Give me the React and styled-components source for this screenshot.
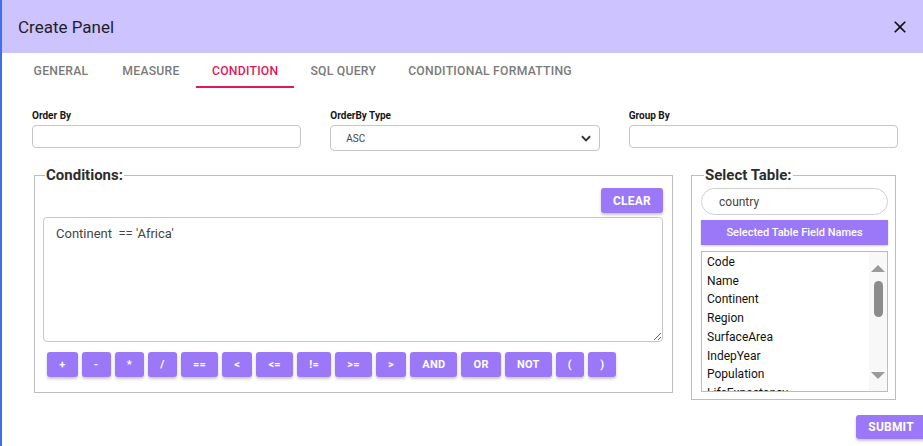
import React from "react";
import styled, { createGlobalStyle } from "styled-components";

const GlobalStyle = createGlobalStyle`
  html, body {
    margin: 0;
    padding: 0;
    background: #fff;
  }
  * {
    box-sizing: border-box;
  }
`;

const Dialog = styled.div`
  width: 923px;
  height: 446px;
  overflow: hidden;
  border-left: 2px solid #3f6fef;
  font-family: Roboto, "Liberation Sans", sans-serif;
  background: #fff;
  display: flex;
  flex-direction: column;
`;

const Header = styled.div`
  height: 53px;
  flex-shrink: 0;
  background: #cdc3fe;
  display: flex;
  align-items: center;
  justify-content: space-between;
  padding: 0 13px 0 16px;
`;

const Title = styled.h2`
  margin: 0;
  font-size: 17px;
  font-weight: 400;
  color: #1f1f2b;
`;

const CloseButton = styled.button`
  border: none;
  background: none;
  padding: 0;
  width: 20px;
  height: 20px;
  display: flex;
  align-items: center;
  justify-content: center;
  cursor: pointer;
`;

const Tabs = styled.div`
  display: flex;
  height: 35px;
  padding-left: 14px;
  flex-shrink: 0;
`;

const Tab = styled.div`
  min-width: 90px;
  padding: 0 16px;
  display: flex;
  align-items: center;
  justify-content: center;
  font-size: 12.2px;
  font-weight: 500;
  letter-spacing: 0.25px;
  text-transform: uppercase;
  color: ${(p) => (p.active ? "#e0185b" : "#7a7a7a")};
  border-bottom: 2px solid ${(p) => (p.active ? "#e0185b" : "transparent")};
  padding-top: 2px;
`;

const FormRow = styled.div`
  display: grid;
  grid-template-columns: repeat(3, 1fr);
  column-gap: 29px;
  padding: 22px 25px 0 30px;
`;

const Field = styled.div`
  display: flex;
  flex-direction: column;
`;

const Label = styled.label`
  font-size: 10px;
  font-weight: 700;
  line-height: 12px;
  color: #161616;
  margin-bottom: 3px;
`;

const TextInput = styled.input`
  height: 23px;
  border: 1px solid #c6c6c6;
  border-radius: 4px;
  outline: none;
  font-family: inherit;
`;

const SelectBox = styled.div`
  height: 26px;
  border: 1px solid #c6c6c6;
  border-radius: 4px;
  display: flex;
  align-items: center;
  justify-content: space-between;
  padding: 0 6px 0 15px;
  font-size: 10px;
  color: #444;
`;

const Main = styled.div`
  display: flex;
  align-items: flex-start;
  gap: 18px;
  padding: 15px 25px 0 32px;
`;

const Group = styled.fieldset`
  margin: 0;
  border: 1px solid #bdbdbd;
  width: ${(p) => p.width}px;
  padding: ${(p) => p.pad};
  min-width: 0;
`;

const Legend = styled.legend`
  font-size: 15px;
  font-weight: 700;
  color: #2d2d2d;
  padding: 0 1px;
  margin-left: ${(p) => p.offset}px;
  line-height: 18px;
`;

const ActionButton = styled.button`
  height: ${(p) => p.h || 25}px;
  padding: 0 12.2px;
  border: none;
  border-radius: 3px;
  background: #9b78f8;
  color: #fff;
  font-family: inherit;
  font-size: ${(p) => p.size || 11}px;
  font-weight: 700;
  letter-spacing: 0.2px;
  box-shadow: 0 2px 3px rgba(0, 0, 0, 0.22);
  cursor: pointer;
`;

const ClearRow = styled.div`
  display: flex;
  justify-content: flex-end;
`;

const Editor = styled.textarea`
  display: block;
  width: 620px;
  height: 125px;
  margin-top: 4px;
  border: 1px solid #c8c8c8;
  border-radius: 4px;
  padding: 8px 12px;
  font-family: inherit;
  font-size: 13px;
  color: #444;
  outline: none;
`;

const OperatorRow = styled.div`
  display: flex;
  gap: 4px;
  margin-top: 10px;
  padding-left: 4px;
`;

const SearchPill = styled.input`
  width: 187px;
  height: 27px;
  border: 1px solid #cfcfcf;
  border-radius: 14px;
  padding: 0 17px;
  font-family: inherit;
  font-size: 12px;
  color: #444;
  outline: none;
`;

const FieldBar = styled.div`
  width: 187px;
  height: 25px;
  margin-top: 5px;
  background: #9b78f8;
  color: #fff;
  font-size: 11px;
  font-weight: 500;
  display: flex;
  align-items: center;
  justify-content: center;
  box-shadow: 0 1px 2px rgba(0, 0, 0, 0.2);
`;

const ListBox = styled.div`
  width: 187px;
  height: 141px;
  margin-top: 6px;
  border: 1px solid #bcbcbc;
  display: flex;
  overflow: hidden;
`;

const Items = styled.ul`
  list-style: none;
  margin: 0;
  padding: 1px 0 0 5px;
  flex: 1;
  overflow: hidden;
`;

const Item = styled.li`
  font-size: 12px;
  line-height: 18.7px;
  color: #111;
`;

const ScrollTrack = styled.div`
  width: 18px;
  background: #f8f8f8;
  display: flex;
  flex-direction: column;
  align-items: center;
  padding-top: 13px;
`;

const Arrow = styled.div`
  width: 0;
  height: 0;
  border-left: 7px solid transparent;
  border-right: 7px solid transparent;
  ${(p) =>
    p.down
      ? "border-top: 7px solid #9a9a9a; margin-top: auto; margin-bottom: 12px;"
      : "border-bottom: 7px solid #9a9a9a;"}
`;

const Thumb = styled.div`
  width: 9px;
  height: 36px;
  margin-top: 9px;
  border-radius: 5px;
  background: #8c8c8c;
`;

const Footer = styled.div`
  display: flex;
  justify-content: flex-end;
  margin-top: 15px;
  margin-right: -1px;
`;

const operators = ["+", "-", "*", "/", "==", "<", "<=", "!=", ">=", ">", "AND", "OR", "NOT", "(", ")"];

const fields = ["Code", "Name", "Continent", "Region", "SurfaceArea", "IndepYear", "Population", "LifeExpectancy"];

const tabs = ["General", "Measure", "Condition", "SQL Query", "Conditional Formatting"];

function CloseIcon() {
  return (
    <svg width="20" height="20" viewBox="0 0 24 24">
      <path
        fill="#111"
        d="M19 6.41L17.59 5 12 10.59 6.41 5 5 6.41 10.59 12 5 17.59 6.41 19 12 13.41 17.59 19 19 17.59 13.41 12z"
      />
    </svg>
  );
}

function Chevron() {
  return (
    <svg width="14" height="14" viewBox="0 0 24 24">
      <path fill="none" stroke="#333" strokeWidth="3.2" d="M5 9l7 7 7-7" />
    </svg>
  );
}

export default function App() {
  return (
    <>
      <GlobalStyle />
      <Dialog>
        <Header>
          <Title>Create Panel</Title>
          <CloseButton>
            <CloseIcon />
          </CloseButton>
        </Header>

        <Tabs>
          {tabs.map((t) => (
            <Tab key={t} active={t === "Condition"}>
              {t}
            </Tab>
          ))}
        </Tabs>

        <FormRow>
          <Field>
            <Label>Order By</Label>
            <TextInput />
          </Field>
          <Field>
            <Label>OrderBy Type</Label>
            <SelectBox>
              ASC
              <Chevron />
            </SelectBox>
          </Field>
          <Field>
            <Label>Group By</Label>
            <TextInput />
          </Field>
        </FormRow>

        <Main>
          <Group width={639} pad="4px 9px 15px 8px">
            <Legend offset={2}>Conditions:</Legend>
            <ClearRow>
              <ActionButton size={12}>CLEAR</ActionButton>
            </ClearRow>
            <Editor defaultValue="Continent  == 'Africa'" />
            <OperatorRow>
              {operators.map((op) => (
                <ActionButton key={op}>{op}</ActionButton>
              ))}
            </OperatorRow>
          </Group>

          <div>
            <Group width={205} pad="4px 7px 7px 9px">
              <Legend offset={3}>Select Table:</Legend>
              <SearchPill defaultValue="country" />
              <FieldBar>Selected Table Field Names</FieldBar>
              <ListBox>
                <Items>
                  {fields.map((f) => (
                    <Item key={f}>{f}</Item>
                  ))}
                </Items>
                <ScrollTrack>
                  <Arrow />
                  <Thumb />
                  <Arrow down />
                </ScrollTrack>
              </ListBox>
            </Group>
            <Footer>
              <ActionButton h={24} size={12} style={{ marginRight: -29 }}>
                SUBMIT
              </ActionButton>
            </Footer>
          </div>
        </Main>
      </Dialog>
    </>
  );
}
